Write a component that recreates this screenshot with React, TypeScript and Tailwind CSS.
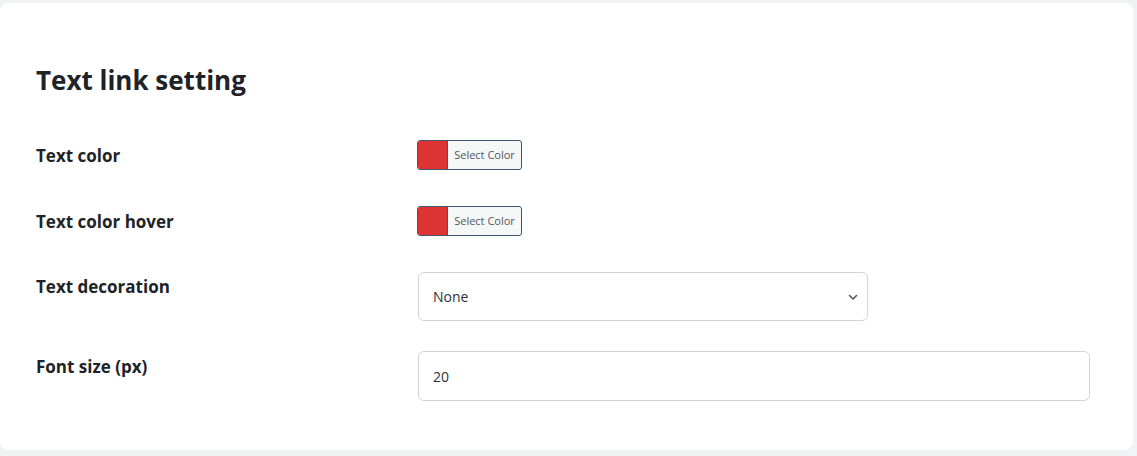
import React from "react";

const font = { fontFamily: '"Open Sans", "Noto Sans", sans-serif' };

function ColorButton() {
  return (
    <button className="flex h-[30px] w-[105px] items-stretch overflow-hidden rounded-[3px] border border-[#3d5873] bg-[#f6f7f7] p-0">
      <span className="w-[30px] bg-[#dd3333] border-r border-[#3d5873]" />
      <span className="flex flex-1 items-center justify-center text-[11px] text-[#50575e]">Select Color</span>
    </button>
  );
}

export default function App() {
  return (
    <div className="h-[456px] w-[1137px] bg-[#f0f2f4] pt-[3px] pr-[4px]" style={font}>
      <div className="h-[447px] rounded-lg bg-white pl-[36px] pt-[59px]">
        <h2 className="text-[26px] leading-[36px] font-bold text-[#1d2327]">Text link setting</h2>
        <div className="mt-[26px] flex flex-col">
          <div className="flex h-[66px]">
            <div className="w-[381px] pt-[19px] text-[17px] leading-[26px] font-bold text-[#1d2327]">Text color</div>
            <div className="pt-[16px]"><ColorButton /></div>
          </div>
          <div className="flex h-[66px]">
            <div className="w-[381px] pt-[19px] text-[17px] leading-[26px] font-bold text-[#1d2327]">Text color hover</div>
            <div className="pt-[16px]"><ColorButton /></div>
          </div>
          <div className="flex h-[79px]">
            <div className="w-[382px] pt-[18px] text-[17px] leading-[26px] font-bold text-[#1d2327]">Text decoration</div>
            <div className="pt-[16px]">
              <div className="flex h-[49px] w-[450px] items-center justify-between rounded-[6px] border border-[#d0d4d8] bg-white pl-[14px] pr-[8px] text-[14px] text-[#2c3338]">
                <span>None</span>
                <svg width="12" height="12" viewBox="0 0 12 12" fill="none" stroke="#50575e" strokeWidth="1.6" strokeLinecap="round" strokeLinejoin="round">
                  <path d="M2.5 4.5 L6 8 L9.5 4.5" />
                </svg>
              </div>
            </div>
          </div>
          <div className="flex">
            <div className="w-[382px] pt-[19px] text-[17px] leading-[26px] font-bold text-[#1d2327]">Font size (px)</div>
            <div className="pt-[16px]">
              <div className="flex h-[50px] w-[672px] items-center rounded-[6px] border border-[#d0d4d8] bg-white pl-[14px] text-[14px] text-[#2c3338]">
                20
              </div>
            </div>
          </div>
        </div>
      </div>
    </div>
  );
}
